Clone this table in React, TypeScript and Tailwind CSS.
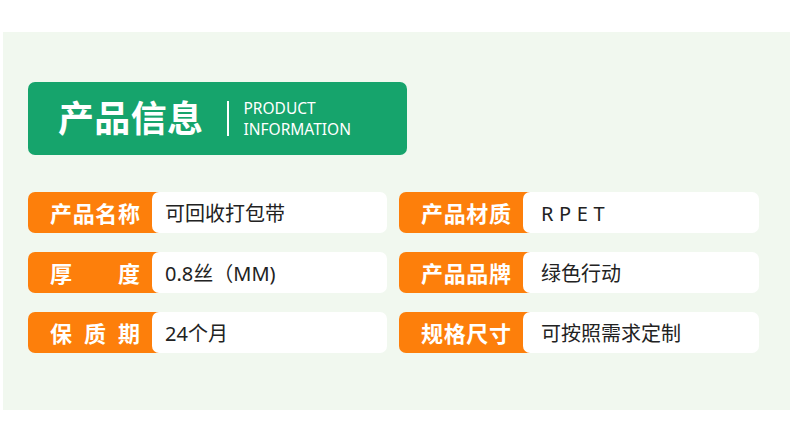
const rows: [string, string, string, string][] = [
  ['产品名称', '可回收打包带', '产品材质', 'RPET'],
  ['厚度', '0.8丝（MM)', '产品品牌', '绿色行动'],
  ['保质期', '24个月', '规格尺寸', '可按照需求定制'],
];

function Label({ text }: { text: string }) {
  const chars = text.split('');
  return (
    <div className="flex w-[132px] shrink-0 items-center justify-between rounded-l-[7px] bg-[#fd7f0b] pl-[22px] pr-[20px] text-[22px] font-bold leading-none text-white">
      {chars.map((c, i) => (
        <span key={i}>{c}</span>
      ))}
    </div>
  );
}

function Row({ label, value, right }: { label: string; value: string; right?: boolean }) {
  return (
    <div className="flex h-[41px]">
      <Label text={label} />
      <div
        className={`relative -ml-[8px] flex flex-1 items-center rounded-[7px] bg-white pt-[3px] text-[20px] leading-none text-[#222] ${
          right ? 'pl-[18px]' : 'pl-[13px]'
        }`}
      >
        <span className={value === 'RPET' ? 'tracking-[0.28em]' : ''}>{value}</span>
      </div>
    </div>
  );
}

export default function App() {
  return (
    <div
      className="h-[422px] w-[790px] bg-white pt-[32px] pl-[3px]"
      style={{ fontFamily: '"Noto Sans", "Noto Sans CJK SC", sans-serif' }}
    >
      <div className="h-[378px] bg-[#f1f8ef] pl-[25px] pt-[50px]">
        <div className="flex h-[73px] w-[379px] items-center rounded-[7px] bg-[#16a46c] pl-[30px] text-white">
          <h2 className="text-[36px] font-bold leading-none tracking-[0.01em]">产品信息</h2>
          <div className="ml-[24px] h-[35px] w-[2px] bg-white" />
          <div className="ml-[14px] text-[15.5px] leading-[21px]">
            <p>PRODUCT</p>
            <p>INFORMATION</p>
          </div>
        </div>

        <div className="mt-[37px] grid w-[731px] grid-cols-[359px_360px] gap-x-[12px] gap-y-[19px]">
          {rows.map(([l1, v1, l2, v2]) => (
            <div key={l1} className="contents">
              <Row label={l1} value={v1} />
              <Row label={l2} value={v2} right />
            </div>
          ))}
        </div>
      </div>
    </div>
  );
}
